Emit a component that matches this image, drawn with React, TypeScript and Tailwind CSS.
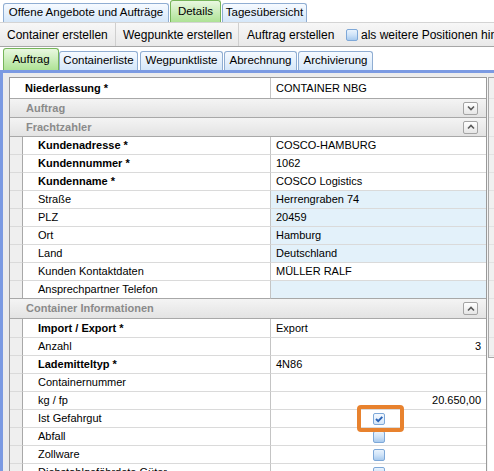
import React from "react";

type Row = {
  t: "top" | "cat" | "sub";
  label: string;
  value?: string;
  bold?: boolean;
  blue?: boolean;
  right?: boolean;
  check?: "on" | "off";
  collapsed?: boolean;
  h?: number;
};

const rows: Row[] = [
  { t: "top", label: "Niederlassung *", value: "CONTAINER NBG", bold: true, h: 21 },
  { t: "cat", label: "Auftrag", collapsed: true, h: 19 },
  { t: "cat", label: "Frachtzahler", collapsed: false, h: 19 },
  { t: "sub", label: "Kundenadresse *", value: "COSCO-HAMBURG", bold: true },
  { t: "sub", label: "Kundennummer *", value: "1062", bold: true },
  { t: "sub", label: "Kundenname *", value: "COSCO Logistics", bold: true },
  { t: "sub", label: "Straße", value: "Herrengraben 74", blue: true },
  { t: "sub", label: "PLZ", value: "20459", blue: true },
  { t: "sub", label: "Ort", value: "Hamburg", blue: true },
  { t: "sub", label: "Land", value: "Deutschland", blue: true },
  { t: "sub", label: "Kunden Kontaktdaten", value: "MÜLLER RALF" },
  { t: "sub", label: "Ansprechpartner Telefon", value: "", blue: true },
  { t: "cat", label: "Container Informationen", collapsed: false, h: 20 },
  { t: "sub", label: "Import / Export *", value: "Export", bold: true, h: 19 },
  { t: "sub", label: "Anzahl", value: "3", right: true },
  { t: "sub", label: "Lademitteltyp *", value: "4N86", bold: true },
  { t: "sub", label: "Containernummer", value: "" },
  { t: "sub", label: "kg / fp", value: "20.650,00", right: true },
  { t: "sub", label: "Ist Gefahrgut", check: "on" },
  { t: "sub", label: "Abfall", check: "off" },
  { t: "sub", label: "Zollware", check: "off" },
  { t: "sub", label: "Diebstahlgefährdete Güter", check: "off" },
];

const H: Record<number, string> = {
  18: "h-[18px]",
  19: "h-[19px]",
  20: "h-[20px]",
  21: "h-[21px]",
};

function Check({ on }: { on: boolean }) {
  return (
    <span
      className={
        "flex h-[12px] w-[12px] shrink-0 items-center justify-center rounded-[2px] border border-[#7ea8d8] " +
        (on
          ? "bg-gradient-to-b from-[#f4f9ff] to-[#d4e6f8]"
          : "bg-gradient-to-b from-[#e9f3fd] via-[#cfe3f8] to-[#a8caee]")
      }
    >
      {on && (
        <svg width="10" height="10" viewBox="0 0 10 10">
          <path d="M2 5 L4.2 7.2 L8.3 2.8" fill="none" stroke="#2a63b6" strokeWidth="1.9" />
        </svg>
      )}
    </span>
  );
}

function CatBtn({ collapsed }: { collapsed: boolean }) {
  return (
    <span className="flex h-[13px] w-[15px] items-center justify-center rounded-[2px] border border-[#a4a4a4] bg-gradient-to-b from-[#ffffff] to-[#e6e6e6]">
      <svg width="8" height="6" viewBox="0 0 8 6">
        {collapsed ? (
          <path d="M1 1.5 L4 4.5 L7 1.5" fill="none" stroke="#5a5a5a" strokeWidth="1.6" />
        ) : (
          <path d="M1 4.5 L4 1.5 L7 4.5" fill="none" stroke="#5a5a5a" strokeWidth="1.6" />
        )}
      </svg>
    </span>
  );
}

function GridRow({ r, next }: { r: Row; next?: Row }) {
  const h = H[r.h ?? 18];
  const dark = r.t !== "sub" || !next || next.t !== "sub";
  const bb = dark ? "border-b border-[#a8a8a8]" : "border-b border-[#dadada]";
  if (r.t === "cat") {
    return (
      <div
        className={`${h} ${bb} flex items-center justify-between bg-gradient-to-b from-[#f4f4f4] to-[#e3e3e3] pl-[16px] pr-[8px]`}
      >
        <span className="text-[11px] font-bold text-[#8a8a8a]">{r.label}</span>
        <CatBtn collapsed={!!r.collapsed} />
      </div>
    );
  }
  const value = (
    <div
      className={
        "flex flex-1 items-center px-[5px] text-[11px] text-black " +
        (r.right ? "justify-end " : "") +
        (r.check ? "justify-center " : "") +
        (r.blue ? "bg-[#e3f1fa]" : "bg-white")
      }
    >
      {r.check ? <Check on={r.check === "on"} /> : r.value}
    </div>
  );
  if (r.t === "top") {
    return (
      <div className={`${h} ${bb} flex`}>
        <div className="flex w-[261px] shrink-0 items-center border-r border-[#c4c4c4] bg-white pl-[15px] text-[11px] font-bold text-black">
          {r.label}
        </div>
        {value}
      </div>
    );
  }
  return (
    <div className={`${h} flex`}>
      <div className={`w-[12px] shrink-0 bg-[#efefef] ${bb}`} />
      <div
        className={`flex w-[249px] shrink-0 items-center border-l border-l-[#a8a8a8] border-r border-r-[#c4c4c4] bg-white pl-[15px] text-[11px] text-black ${bb} ${
          r.bold ? "font-bold" : ""
        }`}
      >
        <span className="whitespace-nowrap">{r.label}</span>
      </div>
      <div className={`flex flex-1 ${bb}`}>{value}</div>
    </div>
  );
}

function TopTab({ label, w, active }: { label: string; w: string; active?: boolean }) {
  return (
    <div
      className={
        `${w} flex shrink-0 items-center justify-center rounded-t-[3px] border border-b-0 text-[11.5px] text-black whitespace-nowrap ` +
        (active
          ? "h-[22px] border-[#76b55a] bg-gradient-to-b from-[#e9f8e1] to-[#aee295]"
          : "h-[19px] border-[#8fadd2] bg-gradient-to-b from-[#f6faff] to-[#d5e7f9]")
      }
    >
      {label}
    </div>
  );
}

export default function App() {
  return (
    <div className="relative h-[471px] w-[494px] overflow-hidden bg-white font-['Liberation_Sans',Arial,sans-serif]">
      {/* top tabs */}
      <div className="flex h-[22px] items-end gap-[1px] pl-[3px]">
        <TopTab label="Offene Angebote und Aufträge" w="w-[166px]" />
        <TopTab label="Details" w="w-[51px]" active />
        <TopTab label="Tagesübersicht" w="w-[85px]" />
      </div>

      {/* toolbar */}
      <div className="flex h-[25px] items-center overflow-hidden border-y border-t-[#d4d4d4] border-b-[#a6a6a6] bg-gradient-to-b from-[#f7f7f7] to-[#e9e9e9] text-[12px] text-black">
        <div className="w-[115px] shrink-0 whitespace-nowrap pl-[7px]">Container erstellen</div>
        <div className="h-[23px] w-[1px] shrink-0 bg-[#cfcfcf]" />
        <div className="w-[122px] shrink-0 whitespace-nowrap pl-[7px]">Wegpunkte erstellen</div>
        <div className="h-[23px] w-[1px] shrink-0 bg-[#cfcfcf]" />
        <div className="w-[107px] shrink-0 whitespace-nowrap pl-[8px]">Auftrag erstellen</div>
        <div className="flex shrink-0 items-center gap-[3px] whitespace-nowrap">
          <span className="h-[12px] w-[12px] shrink-0 rounded-[2px] border border-[#7ea8d8] bg-gradient-to-b from-[#e9f3fd] via-[#cfe3f8] to-[#a8caee]" />
          <span>als weitere Positionen hinzufügen</span>
        </div>
      </div>

      {/* second tabs */}
      <div className="flex h-[23px] items-end pl-[3px]">
        <TopTab label="Auftrag" w="w-[56px]" active />
        <TopTab label="Containerliste" w="w-[79px]" />
        <div className="w-[2px] shrink-0" />
        <TopTab label="Wegpunktliste" w="w-[83px]" />
        <div className="w-[1px] shrink-0" />
        <TopTab label="Abrechnung" w="w-[73px]" />
        <div className="w-[1px] shrink-0" />
        <TopTab label="Archivierung" w="w-[75px]" />
      </div>

      <div className="h-[3px] bg-[#7b9ae2]" />

      {/* content */}
      <div className="flex h-[398px]">
        <div className="w-[3px] shrink-0 bg-[#7b9ae2]" />
        <div className="flex flex-1 bg-[#ececec] pl-[6px] pt-[4px]">
          <div className="w-[478px] shrink-0 border-l border-r border-t border-[#9a9a9a] bg-white">
            {rows.map((r, i) => (
              <GridRow key={i} r={r} next={rows[i + 1]} />
            ))}
          </div>
          <div className="w-[1px] shrink-0 bg-[#f4f4f4]" />
          <div className="flex flex-1 flex-col bg-white">
            <div className="h-[281px] border-l border-t border-b border-[#a8a8a8] bg-[#f0f0f0]">
              {rows.slice(0, 15).map((r, i) => (
                <div key={i} className={`${H[r.h ?? 18]} border-b border-[#e2e2e2]`} />
              ))}
            </div>
          </div>
        </div>
      </div>

      {/* highlight */}
      <div className="absolute left-[357px] top-[405px] h-[27px] w-[47px] rounded-[4px] border-[4px] border-[#e8822e]" />
    </div>
  );
}
